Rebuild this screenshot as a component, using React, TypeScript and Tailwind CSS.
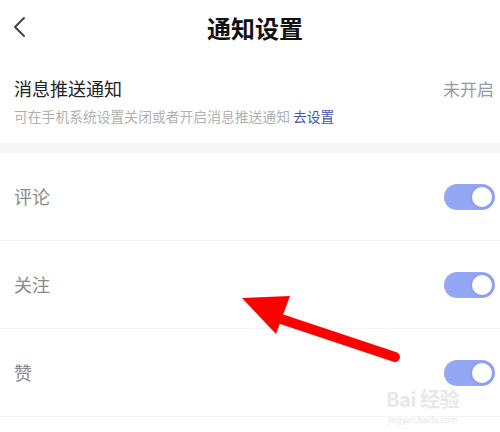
import React from "react";

const font = '"Noto Sans CJK SC", "Noto Sans", sans-serif';

function Toggle() {
  return (
    <div className="flex h-[26px] w-[51px] items-center justify-end rounded-full bg-[#94a7f5] pr-[1px]">
      <div className="h-[24px] w-[24px] rounded-full border-2 border-[#8e9ff0] bg-white" />
    </div>
  );
}

function Row({ label }: { label: string }) {
  return (
    <div className="flex h-[88px] items-center justify-between border-b border-[#f5f5f5] pl-[14px] pr-[5px]">
      <span className="text-[18px] text-[#8a8a8a]">{label}</span>
      <Toggle />
    </div>
  );
}

export default function App() {
  const rows = ["评论", "关注", "赞"];

  return (
    <div
      className="relative h-[432px] w-[500px] overflow-hidden bg-white"
      style={{ fontFamily: font }}
    >
      <div className="relative flex h-[55px] items-center justify-center">
        <svg
          className="absolute left-[12px] top-[16px]"
          width="16"
          height="22"
          viewBox="0 0 16 22"
          fill="none"
        >
          <path d="M12 2 L3 11 L12 20" stroke="#444" strokeWidth="2" strokeLinecap="round" strokeLinejoin="round" />
        </svg>
        <h1 className="pl-[10px] text-[24px] font-bold text-[#111]">通知设置</h1>
      </div>

      <div className="flex h-[88px] flex-col pl-[14px] pr-[6px] pt-[20px]">
        <div className="flex items-center justify-between">
          <span className="text-[18px] text-[#222]">消息推送通知</span>
          <span className="text-[17px] text-[#9a9a9a]">未开启</span>
        </div>
        <p className="mt-[4px] text-[13.8px] text-[#b0b0b0]">
          可在手机系统设置关闭或者开启消息推送通知{" "}
          <span className="text-[#4356ad]">去设置</span>
        </p>
      </div>

      <div className="h-[10px] bg-[#f7f7f7]" />

      {rows.map((r) => (
        <Row key={r} label={r} />
      ))}

      <div className="absolute left-[386px] top-[388px] flex flex-col items-center text-[#e8e8e8]">
        <span className="text-[20px] leading-[22px] font-bold tracking-tight">Bai 经验</span>
        <span className="mt-[5px] text-[8px] leading-[10px]">jingyan.baidu.com</span>
      </div>

      <svg
        className="absolute left-0 top-0"
        width="500"
        height="432"
        viewBox="0 0 500 432"
      >
        <line x1="395" y1="357" x2="272" y2="316" stroke="#f00" strokeWidth="10" strokeLinecap="round" />
        <polygon points="242,298 290,296 276,334" fill="#f00" />
      </svg>
    </div>
  );
}
